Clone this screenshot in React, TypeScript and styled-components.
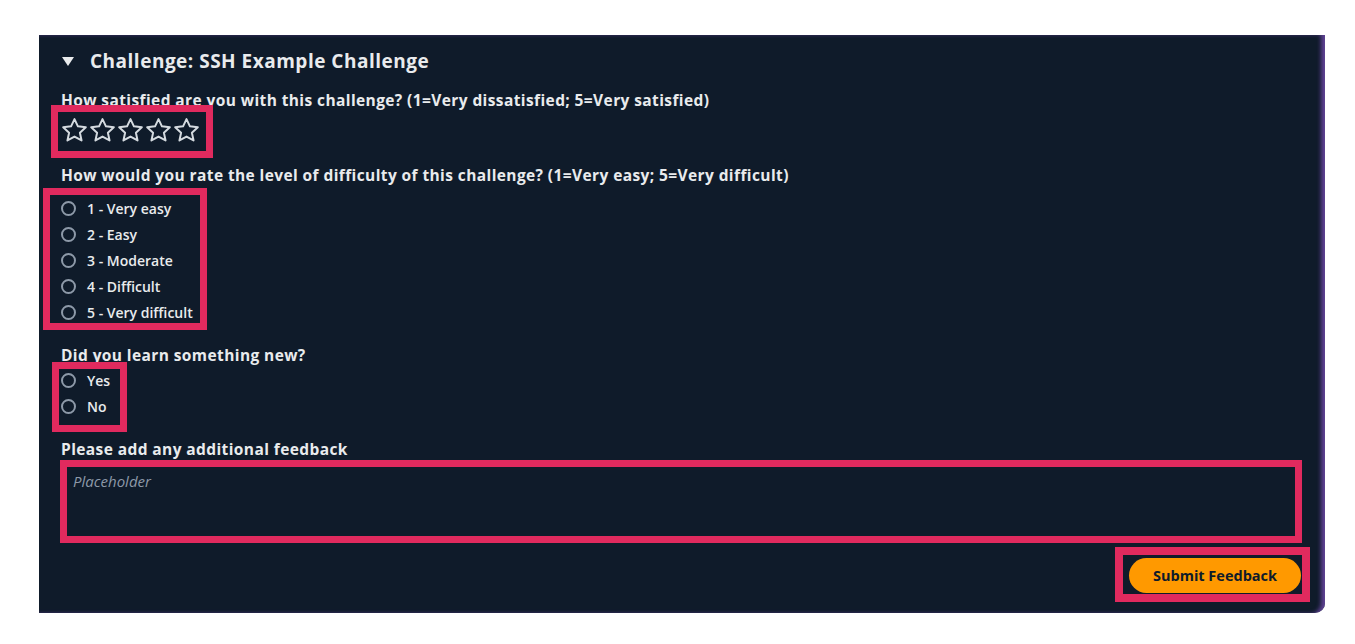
import React from "react";
import styled, { createGlobalStyle } from "styled-components";

const Global = createGlobalStyle`
  html, body { margin: 0; padding: 0; background: #ffffff; }
  body { font-family: "Open Sans", "Noto Sans", sans-serif; }
  *, *::before, *::after { box-sizing: border-box; }
`;

const Page = styled.div`
  padding: 35px 0 0 39px;
`;

const Panel = styled.section`
  width: 1286px;
  background: #0f1b2a;
  padding: 14px 24px 20px 22px;
  border-bottom-right-radius: 10px;
  box-shadow: inset -5px 0 4px -1px rgba(104, 70, 160, 0.9);
  display: flex;
  flex-direction: column;
  color: #e9ebed;
`;

const Header = styled.div`
  display: flex;
  align-items: center;
  gap: 16px;
  height: 24px;
  padding-left: 1px;
`;

const Caret = styled.span`
  width: 0;
  height: 0;
  border-left: 6px solid transparent;
  border-right: 6px solid transparent;
  border-top: 9px solid #e9ebed;
  margin-top: 1px;
`;

const Title = styled.h2`
  margin: 0;
  font-size: 19px;
  letter-spacing: 0.5px;
  line-height: 24px;
  font-weight: 700;
  color: #e9ebed;
`;

const Label = styled.div<{ $mt: number }>`
  margin-top: ${(p) => p.$mt}px;
  font-size: 15.5px;
  letter-spacing: 0.4px;
  line-height: 20px;
  font-weight: 700;
  color: #e9ebed;
`;

const Mark = styled.div<{ $l: number; $t: number; $w: number; $h: number; $bw?: number; $mt: number }>`
  position: relative;
  align-self: flex-start;
  margin-top: ${(p) => p.$mt}px;
  &::after {
    content: "";
    position: absolute;
    left: ${(p) => p.$l}px;
    top: ${(p) => p.$t}px;
    width: ${(p) => p.$w}px;
    height: ${(p) => p.$h}px;
    border: ${(p) => p.$bw ?? 7}px solid #e02a5e;
    pointer-events: none;
  }
`;

const WideMark = styled(Mark)`
  align-self: stretch;
`;

const EndMark = styled(Mark)`
  align-self: flex-end;
`;

const Stars = styled.div`
  display: flex;
  align-items: center;
  gap: 1px;
  height: 30px;
`;

const StarIcon = styled.svg`
  width: 27px;
  height: 27px;
  display: block;
`;

const RadioGroup = styled.div`
  display: flex;
  flex-direction: column;
`;

const RadioRow = styled.label`
  display: flex;
  align-items: center;
  gap: 11px;
  height: 26px;
  font-size: 14px;
  font-weight: 600;
  color: #e9ebed;
`;

const Circle = styled.span`
  width: 15px;
  height: 15px;
  border-radius: 50%;
  border: 2px solid #8d99a8;
  flex: none;
`;

const TextArea = styled.textarea`
  display: block;
  width: 100%;
  height: 80px;
  resize: none;
  background: #0f1b2a;
  border: 2px solid #7d8998;
  border-radius: 4px;
  padding: 8px 10px;
  font-family: "Open Sans", "Noto Sans", sans-serif;
  font-size: 15px;
  line-height: 20px;
  color: #e9ebed;
  outline: none;
  &::placeholder {
    color: #8d99a8;
    font-style: italic;
  }
`;

const Button = styled.button`
  display: block;
  height: 35px;
  width: 172px;
  border: none;
  border-radius: 18px;
  background: #ff9900;
  color: #0f1b2a;
  font-family: "Open Sans", "Noto Sans", sans-serif;
  font-size: 14.5px;
  font-weight: 700;
  padding: 0 18px;
  cursor: pointer;
`;

const Star = () => (
  <StarIcon viewBox="0 0 26 26">
    <path
      d="M13 2l3.3 7 7.6 0.9-5.7 5.2 1.6 7.5L13 18.8l-6.8 3.8 1.6-7.5-5.7-5.2 7.6-0.9z"
      fill="none"
      stroke="#d5dbe0"
      strokeWidth="1.9"
      strokeLinejoin="round"
    />
  </StarIcon>
);

const difficulty = ["1 - Very easy", "2 - Easy", "3 - Moderate", "4 - Difficult", "5 - Very difficult"];

export default function App() {
  return (
    <>
      <Global />
      <Page>
        <Panel>
          <Header>
            <Caret />
            <Title>Challenge: SSH Example Challenge</Title>
          </Header>
          <Label $mt={17}>How satisfied are you with this challenge? (1=Very dissatisfied; 5=Very satisfied)</Label>
          <Mark $mt={5} $l={-10} $t={-10} $w={162} $h={53}>
            <Stars>
              {[0, 1, 2, 3, 4].map((i) => (
                <Star key={i} />
              ))}
            </Stars>
          </Mark>
          <Label $mt={20}>How would you rate the level of difficulty of this challenge? (1=Very easy; 5=Very difficult)</Label>
          <Mark $mt={10} $l={-18} $t={-7} $w={164} $h={142}>
            <RadioGroup>
              {difficulty.map((d) => (
                <RadioRow key={d}>
                  <Circle />
                  {d}
                </RadioRow>
              ))}
            </RadioGroup>
          </Mark>
          <Label $mt={20}>Did you learn something new?</Label>
          <Mark $mt={2} $l={-9} $t={-5} $w={75} $h={70}>
            <RadioGroup>
              {["Yes", "No"].map((d) => (
                <RadioRow key={d}>
                  <Circle />
                  {d}
                </RadioRow>
              ))}
            </RadioGroup>
          </Mark>
          <Label $mt={20}>Please add any additional feedback</Label>
          <WideMark $mt={2} $l={-1} $t={-1} $w={1242} $h={83}>
            <TextArea placeholder="Placeholder" />
          </WideMark>
          <EndMark $mt={17} $l={-14} $t={-11} $w={195} $h={55} $bw={8}>
            <Button>Submit Feedback</Button>
          </EndMark>
        </Panel>
      </Page>
    </>
  );
}
